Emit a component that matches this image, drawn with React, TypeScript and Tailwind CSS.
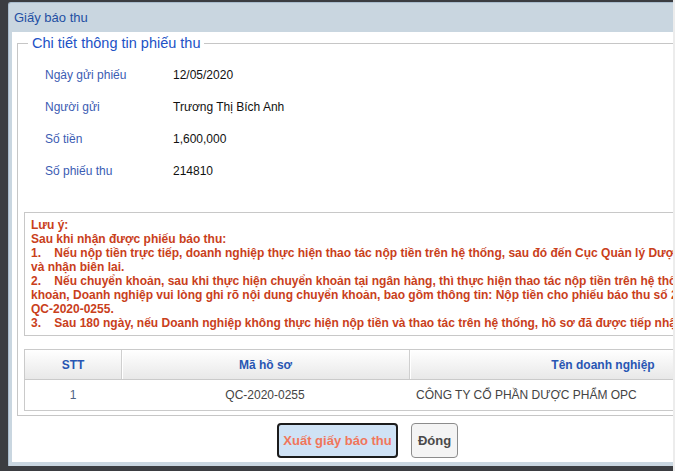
import React from "react";

// ============ Data ============

const INFO_ROWS = [
  { label: "Ngày gửi phiếu", value: "12/05/2020" },
  { label: "Người gửi", value: "Trương Thị Bích Anh" },
  { label: "Số tiền", value: "1,600,000" },
  { label: "Số phiếu thu", value: "214810" },
];

const NOTE_LINES = [
  "Lưu ý:",
  "Sau khi nhận được phiếu báo thu:",
  "1.\u00a0\u00a0\u00a0\u00a0Nếu nộp tiền trực tiếp, doanh nghiệp thực hiện thao tác nộp tiền trên hệ thống, sau đó đến Cục Quản lý Dược để nộp tiền",
  "và nhận biên lai.",
  "2.\u00a0\u00a0\u00a0\u00a0Nếu chuyển khoản, sau khi thực hiện chuyển khoản tại ngân hàng, thì thực hiện thao tác nộp tiền trên hệ thống. Khi chuyển",
  "khoản, Doanh nghiệp vui lòng ghi rõ nội dung chuyển khoản, bao gồm thông tin: Nộp tiền cho phiếu báo thu số 214810, mã hồ sơ",
  "QC-2020-0255.",
  "3.\u00a0\u00a0\u00a0\u00a0Sau 180 ngày, nếu Doanh nghiệp không thực hiện nộp tiền và thao tác trên hệ thống, hồ sơ đã được tiếp nhận sẽ bị hủy.",
];

const HEADERS = ["STT", "Mã hồ sơ", "Tên doanh nghiệp", "Ghi chú"];

// ============ Component ============

const App: React.FC = () => {
  return (
    <div className="w-[675px] h-[471px] overflow-hidden flex bg-[#3b3d41] font-['Liberation_Sans',Arial,sans-serif]">
      <div className="w-[673px] overflow-hidden pt-[2px] pl-[8px]">
        <div className="w-[900px] bg-[#c9d6e0] border-l border-t border-[#a9bccd] rounded-tl-[3px] px-[3px] pb-[4px]">
          {/* title bar */}
          <div className="h-[29px] flex items-center pl-[2px] text-[13px] text-[#1f4fa3]">
            Giấy báo thu
          </div>

          {/* body */}
          <div className="bg-white pt-[2px] pl-[5px] pb-[4px]">
            <fieldset className="border border-[#c6c6c6] px-[6px] pb-[4px] w-[860px]">
              <legend className="ml-[4px] px-[4px] text-[14.5px] leading-[18px] text-[#2152c6]">
                Chi tiết thông tin phiếu thu
              </legend>

              <div className="mt-[7px] pl-[21px]">
                {INFO_ROWS.map((row) => (
                  <div key={row.label} className="h-[32px] flex items-center text-[12px]">
                    <span className="w-[128px] text-[#3b5cb3]">{row.label}</span>
                    <span className="text-[#111]">{row.value}</span>
                  </div>
                ))}
              </div>

              <div className="mt-[25px] border border-[#c8c8c8] px-[6px] pt-[5px] pb-[5px] text-[12px] leading-[14px] font-bold text-[#c9401b]">
                {NOTE_LINES.map((line, i) => (
                  <div key={i} className="whitespace-nowrap">
                    {line}
                  </div>
                ))}
              </div>

              <div className="mt-[13px] border border-[#cacaca] text-[12px]">
                <div className="grid grid-cols-[96px_288px_387px_1fr] h-[30px] bg-gradient-to-b from-white to-[#e8e8e8] border-b border-[#cacaca] font-bold text-[#2856b3]">
                  {HEADERS.map((h, i) => (
                    <div
                      key={h}
                      className={`flex items-center justify-center ${
                        i > 0 ? "border-l border-[#cfcfcf] shadow-[inset_1px_0_0_#fff]" : ""
                      }`}
                    >
                      {h}
                    </div>
                  ))}
                </div>
                <div className="grid grid-cols-[96px_288px_387px_1fr] h-[30px] items-center text-[#444]">
                  <div className="text-center text-[#4f6385]">1</div>
                  <div className="text-center">QC-2020-0255</div>
                  <div className="pl-[7px]">CÔNG TY CỔ PHẦN DƯỢC PHẨM OPC</div>
                  <div />
                </div>
              </div>
            </fieldset>

            <div className="w-[701px] mt-[7px] flex justify-center gap-[13px]">
              <button
                type="button"
                className="h-[35px] w-[121px] bg-[#cfe2f5] border-2 border-[#1c1c1c] rounded-[4px] text-[13px] font-bold text-[#f1765b]"
              >
                Xuất giấy báo thu
              </button>
              <button
                type="button"
                className="h-[35px] w-[47px] bg-[#f4f4f4] border border-[#8c8c8c] rounded-[4px] text-[13px] font-bold text-[#4a4a4a]"
              >
                Đóng
              </button>
            </div>
          </div>
        </div>
      </div>
      <div className="w-[2px] bg-[#ececec]" />
    </div>
  );
};

export default App;
